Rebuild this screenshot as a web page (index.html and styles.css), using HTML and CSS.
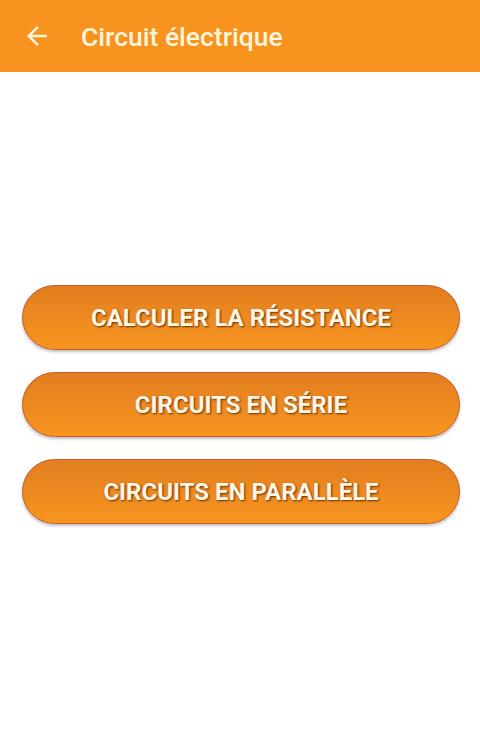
FILE: index.html
```html
<!DOCTYPE html>
<html>
<head>
<meta charset="utf-8">
<link rel="stylesheet" href="styles.css">
</head>
<body>
<div class="app">
  <header class="bar">
    <svg class="back" width="30" height="30" viewBox="0 0 24 24"><path d="M20 11H7.83l5.59-5.59L12 4l-8 8 8 8 1.41-1.41L7.83 13H20v-2z" fill="#FFF4DC"/></svg>
    <h1 class="title">Circuit électrique</h1>
  </header>
  <main class="content">
    <button class="btn">CALCULER LA RÉSISTANCE</button>
    <button class="btn">CIRCUITS EN SÉRIE</button>
    <button class="btn">CIRCUITS EN PARALLÈLE</button>
  </main>
</div>
</body>
</html>
```
FILE: styles.css
```css
html, body { margin: 0; padding: 0; background: #fff; }
.app { width: 480px; height: 755px; display: flex; flex-direction: column; font-family: Roboto, "Liberation Sans", sans-serif; }
.bar { height: 72px; background: #F7931E; display: flex; align-items: center; padding-left: 22px; box-sizing: border-box; }
.back { display: block; }
.title { margin: 0 0 0 29px; font-size: 26.5px; font-weight: 500; color: #FFF4DC; letter-spacing: 0; }
.content { display: flex; flex-direction: column; gap: 22px; padding: 213px 20px 0 22px; }
.btn { height: 65px; border-radius: 33px; border: 1.5px solid #C6582C; background: linear-gradient(#E27E1F, #F79520); color: #FFF6E6; font-family: Roboto, "Liberation Sans", sans-serif; font-weight: 700; font-size: 24px; text-shadow: 1px 1px 2px rgba(80,30,0,0.85); box-shadow: 0 2px 3px rgba(0,0,0,0.25); padding: 0; }
```
